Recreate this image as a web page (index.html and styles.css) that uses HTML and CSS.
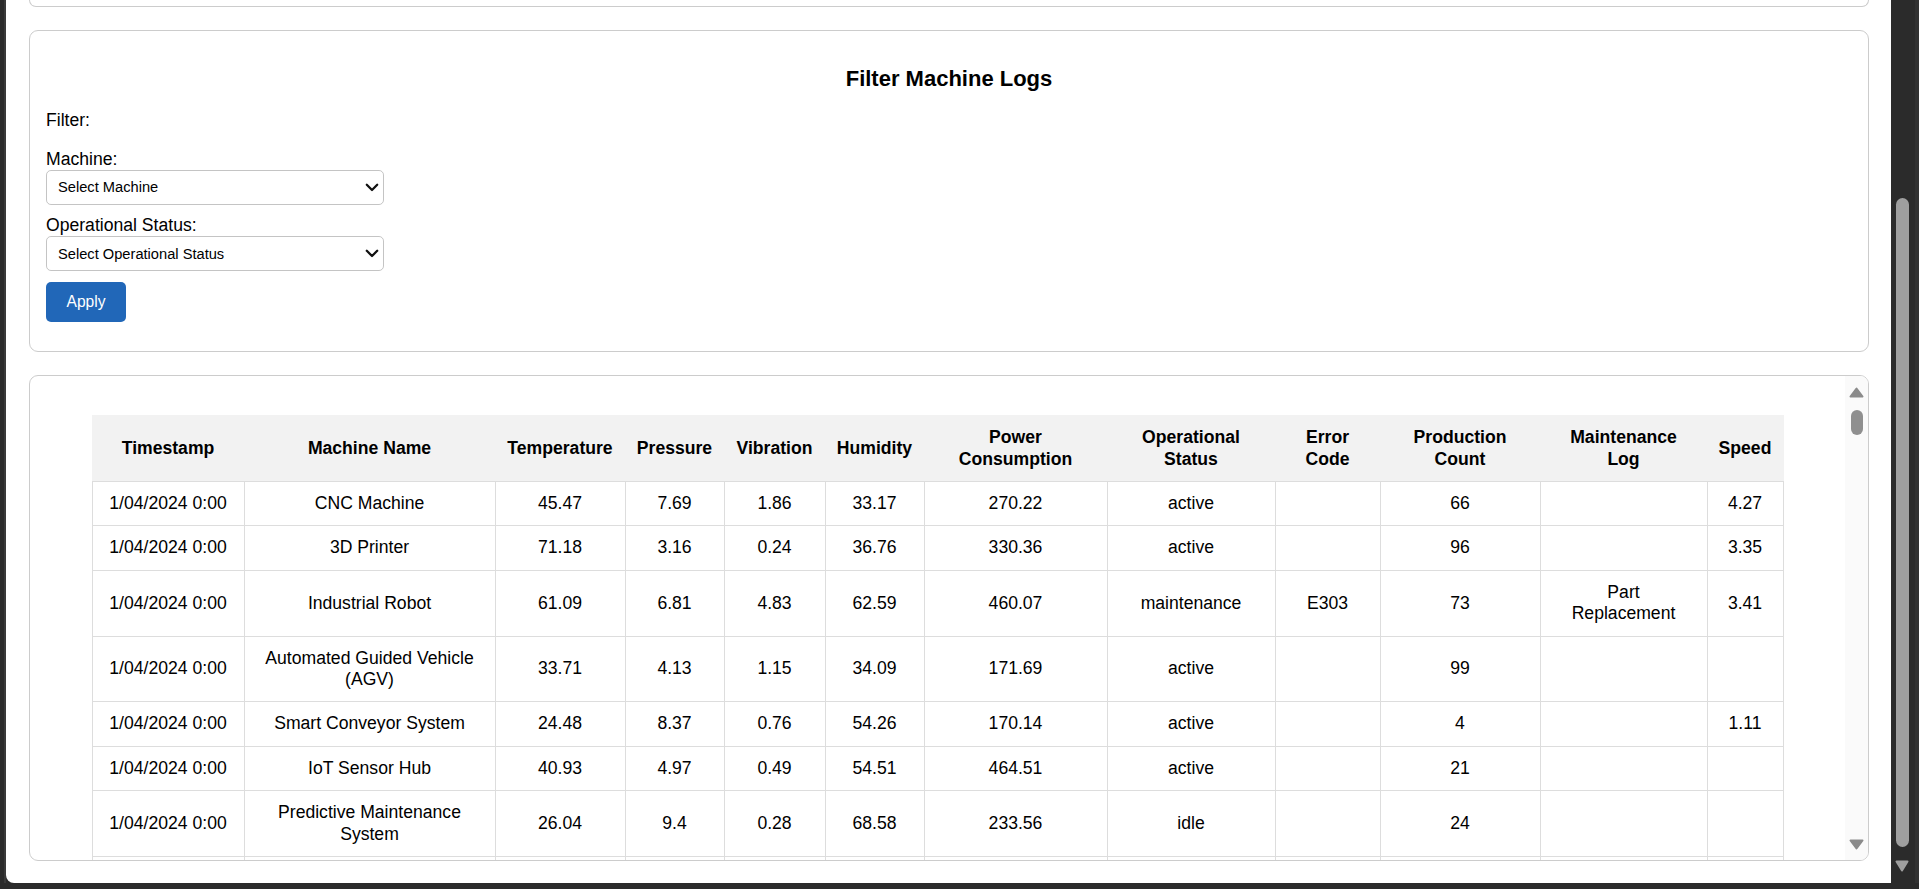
FILE: index.html
```html
<!DOCTYPE html>
<html lang="en">
<head>
<meta charset="utf-8">
<title>Machine Logs</title>
<link rel="stylesheet" href="styles.css">
</head>
<body>
<div class="window">
  <div class="edge"></div>
  <main class="page">
    <section class="card card-stub"></section>

    <section class="card filter-card">
      <h2 class="filter-title">Filter Machine Logs</h2>
      <div class="filter-heading">Filter:</div>
      <label class="field-label" for="machine">Machine:</label>
      <div class="select-wrap">
        <select id="machine" class="field-select">
          <option>Select Machine</option>
          <option>CNC Machine</option>
          <option>3D Printer</option>
          <option>Industrial Robot</option>
        </select>
        <svg class="select-chevron" width="14" height="9" viewBox="0 0 14 9"><path d="M1.8 1.8 L7 7 L12.2 1.8" fill="none" stroke="#111" stroke-width="2.3" stroke-linecap="round" stroke-linejoin="round"/></svg>
      </div>
      <label class="field-label field-label-gap" for="status">Operational Status:</label>
      <div class="select-wrap">
        <select id="status" class="field-select">
          <option>Select Operational Status</option>
          <option>active</option>
          <option>idle</option>
          <option>maintenance</option>
        </select>
        <svg class="select-chevron" width="14" height="9" viewBox="0 0 14 9"><path d="M1.8 1.8 L7 7 L12.2 1.8" fill="none" stroke="#111" stroke-width="2.3" stroke-linecap="round" stroke-linejoin="round"/></svg>
      </div>
      <button class="apply-btn" type="button">Apply</button>
    </section>

    <section class="card table-card">
      <div class="table-scroll">
        <table class="log-table">
          <colgroup>
            <col class="c1"><col class="c2"><col class="c3"><col class="c4"><col class="c5"><col class="c6">
            <col class="c7"><col class="c8"><col class="c9"><col class="c10"><col class="c11"><col class="c12">
          </colgroup>
          <thead>
            <tr>
              <th>Timestamp</th>
              <th>Machine Name</th>
              <th>Temperature</th>
              <th>Pressure</th>
              <th>Vibration</th>
              <th>Humidity</th>
              <th>Power<br>Consumption</th>
              <th>Operational<br>Status</th>
              <th>Error<br>Code</th>
              <th>Production<br>Count</th>
              <th>Maintenance<br>Log</th>
              <th>Speed</th>
            </tr>
          </thead>
          <tbody>
            <tr><td>1/04/2024 0:00</td><td>CNC Machine</td><td>45.47</td><td>7.69</td><td>1.86</td><td>33.17</td><td>270.22</td><td>active</td><td></td><td>66</td><td></td><td>4.27</td></tr>
            <tr><td>1/04/2024 0:00</td><td>3D Printer</td><td>71.18</td><td>3.16</td><td>0.24</td><td>36.76</td><td>330.36</td><td>active</td><td></td><td>96</td><td></td><td>3.35</td></tr>
            <tr><td>1/04/2024 0:00</td><td>Industrial Robot</td><td>61.09</td><td>6.81</td><td>4.83</td><td>62.59</td><td>460.07</td><td>maintenance</td><td>E303</td><td>73</td><td>Part<br>Replacement</td><td>3.41</td></tr>
            <tr><td>1/04/2024 0:00</td><td>Automated Guided Vehicle<br>(AGV)</td><td>33.71</td><td>4.13</td><td>1.15</td><td>34.09</td><td>171.69</td><td>active</td><td></td><td>99</td><td></td><td></td></tr>
            <tr><td>1/04/2024 0:00</td><td>Smart Conveyor System</td><td>24.48</td><td>8.37</td><td>0.76</td><td>54.26</td><td>170.14</td><td>active</td><td></td><td>4</td><td></td><td>1.11</td></tr>
            <tr><td>1/04/2024 0:00</td><td>IoT Sensor Hub</td><td>40.93</td><td>4.97</td><td>0.49</td><td>54.51</td><td>464.51</td><td>active</td><td></td><td>21</td><td></td><td></td></tr>
            <tr><td>1/04/2024 0:00</td><td>Predictive Maintenance<br>System</td><td>26.04</td><td>9.4</td><td>0.28</td><td>68.58</td><td>233.56</td><td>idle</td><td></td><td>24</td><td></td><td></td></tr>
            <tr class="row-partial"><td></td><td></td><td></td><td></td><td></td><td></td><td></td><td></td><td></td><td></td><td></td><td></td></tr>
          </tbody>
        </table>
      </div>
      <div class="vscroll">
        <svg class="vscroll-arrow up" width="15" height="11" viewBox="0 0 15 11"><path d="M7.5 1.5 L13.5 9.5 H1.5 Z" fill="#8b8b8b" stroke="#8b8b8b" stroke-width="2" stroke-linejoin="round"/></svg>
        <div class="vscroll-thumb"></div>
        <div class="vscroll-fill"></div>
        <svg class="vscroll-arrow down" width="15" height="11" viewBox="0 0 15 11"><path d="M1.5 1.5 H13.5 L7.5 9.5 Z" fill="#8b8b8b" stroke="#8b8b8b" stroke-width="2" stroke-linejoin="round"/></svg>
      </div>
    </section>
  </main>
  <div class="pscroll">
    <div class="pscroll-thumb"></div>
    <svg class="pscroll-arrow" width="14" height="12" viewBox="0 0 14 12"><path d="M1.5 1.5 H12.5 L7 10.5 Z" fill="#9f9f9f" stroke="#9f9f9f" stroke-width="2" stroke-linejoin="round"/></svg>
  </div>
</div>
</body>
</html>
```

FILE: styles.css
```css
* { box-sizing: border-box; }

html, body {
  margin: 0;
  height: 889px;
  overflow: hidden;
}

body {
  background: #2b2b2b;
  font-family: "Liberation Sans", Arial, sans-serif;
  color: #000;
}

.window {
  display: flex;
  height: 883px;
}

.edge {
  width: 6px;
  border-right: 2px solid #3a3a3a;
}

.page {
  flex: 1;
  background: #fff;
  border-radius: 0 0 0 8px;
  padding: 0 22px 0 23px;
  overflow: hidden;
  display: flex;
  flex-direction: column;
}

.card {
  border: 1px solid #cccccc;
  border-radius: 9px;
  background: #fff;
  flex-shrink: 0;
}

.card-stub {
  height: 7px;
  border-top: none;
  border-radius: 0 0 9px 9px;
}

/* ---------- filter card ---------- */
.filter-card {
  margin-top: 23px;
  padding: 17px 16px 29px;
  display: flex;
  flex-direction: column;
  align-items: flex-start;
}

.filter-title {
  align-self: stretch;
  text-align: center;
  margin: 18px 0 0;
  font-size: 22px;
  line-height: 25px;
  font-weight: bold;
}

.filter-heading,
.field-label {
  font-size: 17.6px;
  line-height: 21px;
  display: block;
}

.filter-heading { margin-top: 18.5px; }
.field-label { margin-top: 18.3px; }
.field-label-gap { margin-top: 10.4px; }

.select-wrap {
  position: relative;
  width: 338px;
  height: 35px;
}

.field-select {
  zoom: 1.1;
  -webkit-appearance: none;
  appearance: none;
  width: 307.3px;
  height: 31.8px;
  font-family: "Liberation Sans", Arial, sans-serif;
  font-size: 13.333px;
  color: #000;
  background: #fff;
  border: 1px solid #c4c4c4;
  border-radius: 4.5px;
  padding: 0 24px 0 10px;
  display: block;
}

.select-chevron {
  position: absolute;
  right: 5px;
  top: 13px;
  pointer-events: none;
}

.apply-btn {
  margin-top: 11px;
  width: 80px;
  height: 40px;
  background: #2167b8;
  color: #fff;
  border: none;
  border-radius: 5px;
  font-family: "Liberation Sans", Arial, sans-serif;
  font-size: 15.6px;
  padding: 0;
}

/* ---------- table card ---------- */
.table-card {
  margin-top: 23px;
  height: 486px;
  display: flex;
  overflow: hidden;
}

.table-scroll {
  flex: 1;
  min-width: 0;
  padding: 17px;
  overflow: hidden;
}

.log-table {
  width: 95%;
  margin: 22px auto 0;
  border-collapse: collapse;
  table-layout: fixed;
  font-size: 17.6px;
  line-height: 21.4px;
}

.log-table col.c1 { width: 152px; }
.log-table col.c2 { width: 251px; }
.log-table col.c3 { width: 130px; }
.log-table col.c4 { width: 99px; }
.log-table col.c5 { width: 101px; }
.log-table col.c6 { width: 99px; }
.log-table col.c7 { width: 183px; }
.log-table col.c8 { width: 168px; }
.log-table col.c9 { width: 105px; }
.log-table col.c10 { width: 160px; }
.log-table col.c11 { width: 167px; }
.log-table col.c12 { width: 76px; }

.log-table th,
.log-table td {
  padding: 11px 10px;
  text-align: center;
  vertical-align: middle;
  white-space: nowrap;
}

.log-table th {
  background: #f2f2f2;
  font-weight: bold;
  border: 1px solid #f2f2f2;
  border-bottom-color: #dddddd;
}

.log-table td {
  border: 1px solid #dddddd;
}

.log-table .row-partial td {
  height: 44px;
}

/* fake scrollbar of the table card */
.vscroll {
  width: 23px;
  flex-shrink: 0;
  background: #fafafa;
  display: flex;
  flex-direction: column;
  align-items: center;
  padding: 11px 0 10px;
}

.vscroll-arrow { display: block; flex-shrink: 0; }

.vscroll-thumb {
  margin-top: 12px;
  width: 12px;
  height: 25px;
  border-radius: 6px;
  background: #8f8f8f;
}

.vscroll-fill { flex: 1; }

/* fake page scrollbar */
.pscroll {
  width: 28px;
  display: flex;
  flex-direction: column;
  align-items: flex-start;
  padding: 198px 0 0 4px;
  border-right: 4px solid #323232;
}

.pscroll-thumb {
  margin-left: 1px;
  width: 13px;
  height: 649px;
  border-radius: 6.5px;
  background: #9f9f9f;
}

.pscroll-arrow {
  display: block;
  margin-top: 13px;
}
```
